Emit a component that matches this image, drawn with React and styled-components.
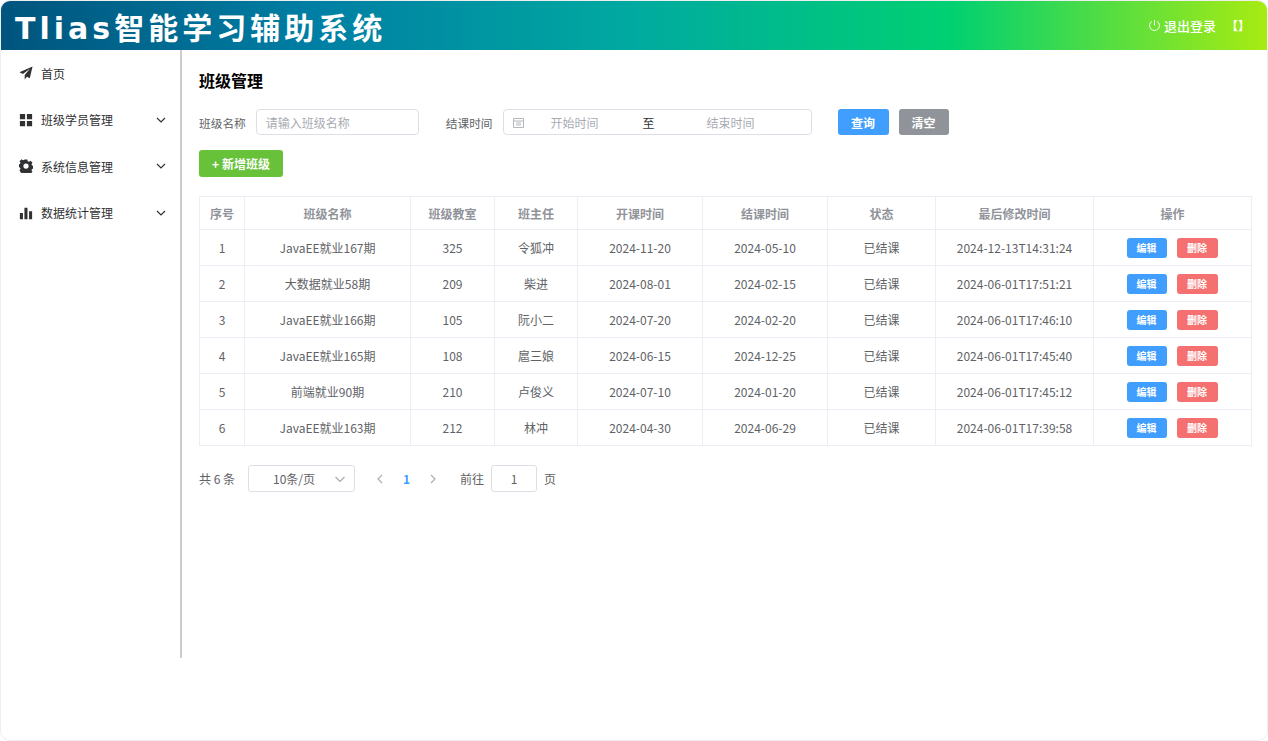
import React from 'react';
import styled, { createGlobalStyle } from 'styled-components';
import { Search } from 'lucide-react';

const FONT = '"Noto Sans CJK SC", "Noto Sans", sans-serif';

const GlobalStyle = createGlobalStyle`
  html, body { margin: 0; padding: 0; background: #fff; }
  * { box-sizing: border-box; }
  body { font-family: ${FONT}; }
`;

const Shell = styled.div`
  width: 1268px;
  height: 741px;
  border: 1px solid #eee;
  border-radius: 10px;
  overflow: hidden;
  background: #fff;
`;

const Header = styled.header`
  height: 49px;
  display: flex;
  align-items: center;
  justify-content: space-between;
  padding: 0 17px 0 14px;
  background: linear-gradient(to right, #00547d, #007fa4, #00aaa0, #00d072, #a8eb12);
`;

const Brand = styled.div`
  color: #fff;
  font-family: "DejaVu Sans", ${FONT};
  font-size: 30px;
  font-weight: 700;
  letter-spacing: 4px;
  white-space: nowrap;
`;

const Logout = styled.div`
  display: flex;
  align-items: center;
  color: #fff;
  font-size: 13px;
  font-weight: 500;
`;

const LogoutIcon = styled.svg`
  width: 13px;
  height: 13px;
  margin-right: 3px;
`;

const Brackets = styled.span`
  margin-left: 10px;
  font-size: 12px;
  font-weight: 700;
`;

const Body = styled.div`
  display: flex;
  height: 608px;
`;

const Sidebar = styled.aside`
  width: 181px;
  flex: none;
  border-right: 2px solid #ccc;
`;

const MenuItem = styled.div`
  height: 46.5px;
  display: flex;
  align-items: center;
  padding: 0 14px 0 18px;
  color: #303133;
  font-size: 12px;
`;

const MenuIcon = styled.svg`
  width: 14px;
  height: 14px;
  margin-right: 8px;
  fill: #303133;
  flex: none;
`;

const MenuLabel = styled.span`
  flex: 1;
`;

const Chevron = styled.svg`
  width: 10px;
  height: 10px;
  fill: none;
  stroke: #303133;
  stroke-width: 1.2;
`;

const Main = styled.main`
  flex: 1;
  padding: 18px 16px 0 17px;
  min-width: 0;
`;

const Title = styled.h1`
  margin: 0 0 17px;
  color: #000;
  font-size: 16px;
  font-weight: 700;
  line-height: 24px;
`;

const FilterRow = styled.div`
  display: flex;
  align-items: center;
  height: 26px;
`;

const FieldLabel = styled.label`
  color: #606266;
  font-size: 11.7px;
  margin-right: 10px;
  white-space: nowrap;
`;

const TextBox = styled.div`
  height: 26px;
  width: ${(p) => p.$width}px;
  border: 1px solid #dcdfe6;
  border-radius: 4px;
  display: flex;
  align-items: center;
  padding-left: 9px;
  color: #a8abb2;
  font-size: 12px;
  margin-right: 27px;
`;

const DateBox = styled(TextBox)`
  padding-left: 9px;
  position: relative;
`;

const DatePart = styled.span`
  width: ${(p) => p.$width}px;
  text-align: center;
  color: ${(p) => p.$dark ? '#303133' : '#a8abb2'};
`;

const CalendarIcon = styled.svg`
  width: 11px;
  height: 11px;
  flex: none;
  fill: none;
  stroke: #b4b7bd;
`;

const Button = styled.button`
  height: ${(p) => p.$height || 26}px;
  width: ${(p) => p.$width}px;
  padding: 0;
  border: none;
  border-radius: 3px;
  color: #fff;
  background: ${(p) => p.$bg};
  font-family: ${FONT};
  font-size: ${(p) => p.$size || 12}px;
  font-weight: 700;
  margin-right: ${(p) => p.$gap || 0}px;
`;

const AddRow = styled.div`
  margin: 15px 0 19px;
  height: 27px;
`;

const Table = styled.table`
  table-layout: fixed;
  border-collapse: collapse;
  width: 1052px;
  font-size: 12px;
  color: #606266;
`;

const Th = styled.th`
  height: 33px;
  padding: 0;
  border: 1px solid #ebeef5;
  color: #909399;
  font-weight: 700;
  text-align: center;
`;

const Td = styled.td`
  height: 36px;
  padding: 0;
  border: 1px solid #ebeef5;
  text-align: center;
`;

const Actions = styled.div`
  display: flex;
  justify-content: center;
  gap: 10px;
  padding-right: 1px;
`;

const Pagination = styled.div`
  display: flex;
  align-items: center;
  margin-top: 19px;
  height: 27px;
  font-size: 12px;
  color: #606266;
`;

const Box = styled.div`
  height: 27px;
  width: ${(p) => p.$width}px;
  border: 1px solid #dcdfe6;
  border-radius: 3px;
  display: flex;
  align-items: center;
  justify-content: center;
  color: #606266;
`;

const SelectBox = styled(Box)`
  justify-content: space-between;
  padding: 0 9px 0 24px;
  margin: 0 20px 0 13px;
`;

const PagerArrow = styled.svg`
  width: 10px;
  height: 10px;
  fill: none;
  stroke: #a8abb2;
  stroke-width: 1.1;
`;

const PageNumber = styled.span`
  width: 43px;
  text-align: center;
  color: #409eff;
  font-weight: 700;
`;

const GotoText = styled.span`
  margin: 0 ${(p) => p.$right}px 0 ${(p) => p.$left}px;
`;

const columns = [
  ['序号', 45], ['班级名称', 166], ['班级教室', 84], ['班主任', 83], ['开课时间', 125],
  ['结课时间', 125], ['状态', 108], ['最后修改时间', 158], ['操作', 158],
];

const rows = [
  [1, 'JavaEE就业167期', 325, '令狐冲', '2024-11-20', '2024-05-10', '已结课', '2024-12-13T14:31:24'],
  [2, '大数据就业58期', 209, '柴进', '2024-08-01', '2024-02-15', '已结课', '2024-06-01T17:51:21'],
  [3, 'JavaEE就业166期', 105, '阮小二', '2024-07-20', '2024-02-20', '已结课', '2024-06-01T17:46:10'],
  [4, 'JavaEE就业165期', 108, '扈三娘', '2024-06-15', '2024-12-25', '已结课', '2024-06-01T17:45:40'],
  [5, '前端就业90期', 210, '卢俊义', '2024-07-10', '2024-01-20', '已结课', '2024-06-01T17:45:12'],
  [6, 'JavaEE就业163期', 212, '林冲', '2024-04-30', '2024-06-29', '已结课', '2024-06-01T17:39:58'],
];

const menus = [
  { label: '首页', icon: <path d="M15.5.5.5 7.2l4 2 8-6-6 7.2v5l2.6-3.2 3.2 1.8z" /> },
  { label: '班级学员管理', arrow: true, icon: <path d="M1 1h6v6H1zM9 1h6v6H9zM1 9h6v6H1zM9 9h6v6H9z" /> },
  { label: '系统信息管理', arrow: true, icon: <path fillRule="evenodd" d="M6.4.5h3.2l.4 2 1.4.6 1.8-1.1 2.2 2.2-1.1 1.8.6 1.4 2 .4v3.2l-2 .4-.6 1.4 1.1 1.8-2.2 2.2-1.8-1.1-1.4.6-.4 2H6.4l-.4-2-1.4-.6-1.8 1.1L.6 12.9l1.1-1.8-.6-1.4-2-.4V6.1l2-.4.6-1.4L.6 2.5 2.8.3l1.8 1.1L6 .8zM8 5a3 3 0 1 0 0 6 3 3 0 0 0 0-6z" /> },
  { label: '数据统计管理', arrow: true, icon: <path d="M1 8h3.5v7H1zM6.2 2h3.5v13H6.2zM11.5 6H15v9h-3.5z" /> },
];

const ArrowDown = () => (
  <Chevron viewBox="0 0 10 10"><path d="M1 3l4 4 4-4" /></Chevron>
);

export default function App() {
  return (
    <>
      <GlobalStyle />
      <Shell>
        <Header>
          <Brand>Tlias智能学习辅助系统</Brand>
          <Logout>
            <LogoutIcon viewBox="0 0 14 14" fill="none" stroke="#fff" strokeWidth="1">
              <path d="M7 1v6M4.2 2.6a5.3 5.3 0 1 0 5.6 0" />
            </LogoutIcon>
            退出登录
            <Brackets>【】</Brackets>
          </Logout>
        </Header>
        <Body>
          <Sidebar>
            {menus.map((m) => (
              <MenuItem key={m.label}>
                <MenuIcon viewBox="0 0 16 16">{m.icon}</MenuIcon>
                <MenuLabel>{m.label}</MenuLabel>
                {m.arrow && <ArrowDown />}
              </MenuItem>
            ))}
          </Sidebar>
          <Main>
            <Title>班级管理</Title>
            <FilterRow>
              <FieldLabel>班级名称</FieldLabel>
              <TextBox $width={163}>请输入班级名称</TextBox>
              <FieldLabel>结课时间</FieldLabel>
              <DateBox $width={309} style={{ marginRight: 26 }}>
                <CalendarIcon viewBox="0 0 11 11"><path d="M.5 1.5h10v9H.5zM.5 4h10M3 6h5M3 8h5" /></CalendarIcon>
                <DatePart $width={102}>开始时间</DatePart>
                <DatePart $width={46} $dark>至</DatePart>
                <DatePart $width={118}>结束时间</DatePart>
              </DateBox>
              <Button $bg="#409eff" $width={51} $gap={10}>查询</Button>
              <Button $bg="#909399" $width={50}>清空</Button>
            </FilterRow>
            <AddRow>
              <Button $bg="#67c23a" $width={84} $height={27}>+ 新增班级</Button>
            </AddRow>
            <Table>
              <colgroup>
                {columns.map(([name, w]) => <col key={name} width={w} />)}
              </colgroup>
              <thead>
                <tr>{columns.map(([name]) => <Th key={name}>{name}</Th>)}</tr>
              </thead>
              <tbody>
                {rows.map((row) => (
                  <tr key={row[0]}>
                    {row.map((cell, i) => <Td key={i}>{cell}</Td>)}
                    <Td>
                      <Actions>
                        <Button $bg="#409eff" $width={40} $height={20} $size={10}>编辑</Button>
                        <Button $bg="#f56c6c" $width={41} $height={20} $size={10} style={{ opacity: 0.96 }}>删除</Button>
                      </Actions>
                    </Td>
                  </tr>
                ))}
              </tbody>
            </Table>
            <Pagination>
              共 6 条
              <SelectBox $width={107}>
                10条/页
                <Chevron viewBox="0 0 10 10" style={{ stroke: '#a8abb2' }}><path d="M.5 3l4.5 4.5L9.500 3" /></Chevron>
              </SelectBox>
              <PagerArrow viewBox="0 0 10 10"><path d="M7 1L3 5l4 4" /></PagerArrow>
              <PageNumber>1</PageNumber>
              <PagerArrow viewBox="0 0 10 10"><path d="M3 1l4 4-4 4" /></PagerArrow>
              <GotoText $left={22} $right={7}>前往</GotoText>
              <Box $width={46}>1</Box>
              <GotoText $left={7} $right={0}>页</GotoText>
            </Pagination>
          </Main>
        </Body>
      </Shell>
    </>
  );
}
